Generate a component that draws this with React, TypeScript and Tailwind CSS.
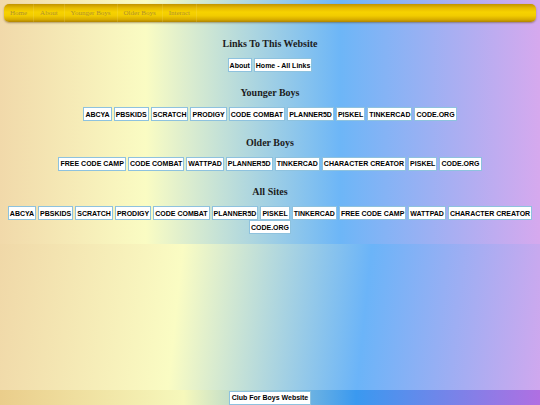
import React from "react";

const navItems = ["Home", "About", "Younger Boys", "Older Boys", "Interact"];

const sections: { title: string; items: string[] }[] = [
  { title: "Links To This Website", items: ["About", "Home - All Links"] },
  {
    title: "Younger Boys",
    items: ["ABCYA", "PBSKIDS", "SCRATCH", "PRODIGY", "CODE COMBAT", "PLANNER5D", "PISKEL", "TINKERCAD", "CODE.ORG"],
  },
  {
    title: "Older Boys",
    items: ["FREE CODE CAMP", "CODE COMBAT", "WATTPAD", "PLANNER5D", "TINKERCAD", "CHARACTER CREATOR", "PISKEL", "CODE.ORG"],
  },
  {
    title: "All Sites",
    items: [
      "ABCYA",
      "PBSKIDS",
      "SCRATCH",
      "PRODIGY",
      "CODE COMBAT",
      "PLANNER5D",
      "PISKEL",
      "TINKERCAD",
      "FREE CODE CAMP",
      "WATTPAD",
      "CHARACTER CREATOR",
      "CODE.ORG",
    ],
  },
];

function LinkButton({ label }: { label: string }) {
  return (
    <a className="inline-flex h-[14px] items-center border border-[#8ec2de] bg-white px-[1px] font-['Liberation_Sans',Arial,sans-serif] text-[7px] font-bold leading-none text-black">
      {label}
    </a>
  );
}

export default function App() {
  return (
    <div className="flex min-h-screen flex-col">
      <div className="bg-[linear-gradient(90deg,#f1d9aa_0%,#fafcc3_27%,#6db6f7_63%,#d6a9ee_100%)] px-[4px] pb-[10px] pt-[4px]">
        <nav className="flex h-[18px] items-center rounded-[5px] bg-[linear-gradient(180deg,#c29300_0%,#e6bb00_22%,#f7d200_45%,#f2cc00_65%,#d9ae00_85%,#b08400_100%)] shadow-[0_1px_2px_rgba(90,60,0,0.45)]">
          {navItems.map((n) => (
            <span
              key={n}
              className="border-r border-[rgba(255,240,160,0.15)] px-[6px] font-['Liberation_Serif',serif] text-[7px] leading-[18px] text-[#b09030]"
            >
              {n}
            </span>
          ))}
        </nav>
        {sections.map((s, idx) => (
          <section key={s.title} className="flex flex-col items-center">
            <h2
              className={
                idx === 0
                  ? "mb-[8px] mt-[16px] h-[12px] font-['Liberation_Serif',serif] text-[10px] font-bold leading-[12px] text-[#1c1c1c]"
                  : "mb-[8px] mt-[15.4px] h-[12px] font-['Liberation_Serif',serif] text-[10px] font-bold leading-[12px] text-[#1c1c1c]"
              }
            >
              {s.title}
            </h2>
            <div className="flex flex-wrap justify-center gap-x-[2px]">
              {s.items.map((it, i) => (
                <LinkButton key={i} label={it} />
              ))}
            </div>
          </section>
        ))}
      </div>
      <div className="flex-1 bg-[linear-gradient(96deg,#f0d8a8_0%,#fafcc3_33%,#6bb4f8_67%,#d0a8ee_100%)]" />
      <footer className="flex h-[15px] items-center justify-center bg-[linear-gradient(90deg,#eacd8b_0%,#f6f8bb_34%,#3a99f0_66%,#b06fe2_100%)]">
        <a className="inline-flex h-[14px] items-center border border-[#8ec2de] bg-white px-[2px] font-['Liberation_Sans',Arial,sans-serif] text-[7px] font-bold leading-none text-black">
          Club For Boys Website
        </a>
      </footer>
    </div>
  );
}
